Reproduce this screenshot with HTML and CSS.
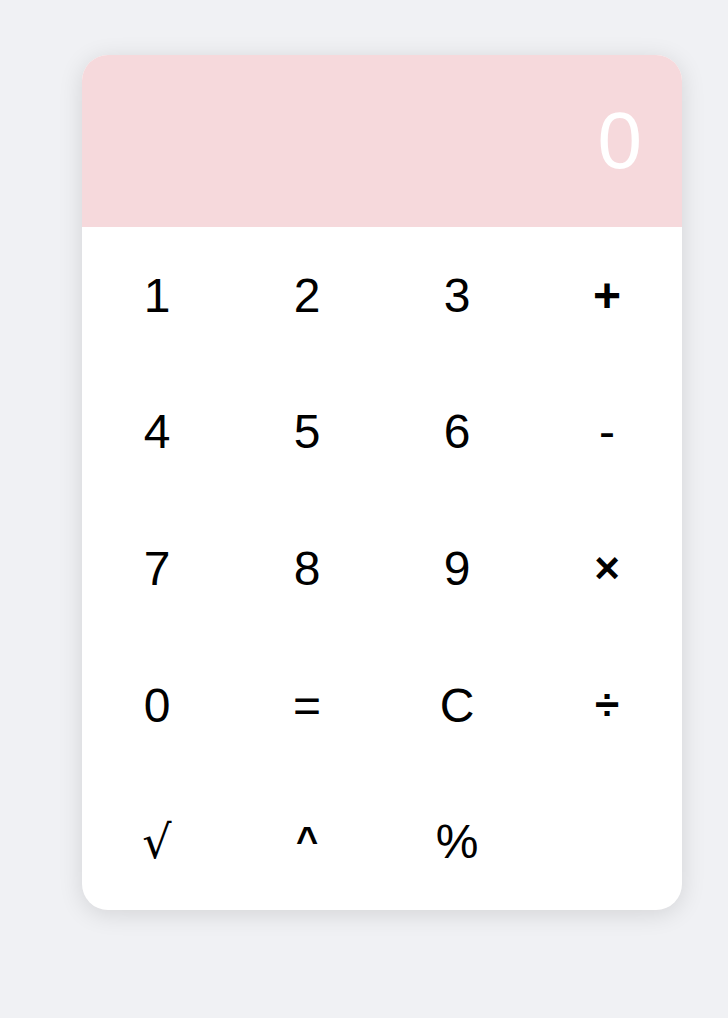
FILE: index.html
```html
<!DOCTYPE html>
<html>
<head>
<meta charset="utf-8">
<link rel="stylesheet" href="styles.css">
</head>
<body>
<div class="calc">
  <div class="display">0</div>
  <div class="keys">
    <button class="key">1</button>
    <button class="key">2</button>
    <button class="key">3</button>
    <button class="key key-bold">+</button>
    <button class="key">4</button>
    <button class="key">5</button>
    <button class="key">6</button>
    <button class="key">-</button>
    <button class="key">7</button>
    <button class="key">8</button>
    <button class="key">9</button>
    <button class="key key-bold key-small">×</button>
    <button class="key">0</button>
    <button class="key">=</button>
    <button class="key">C</button>
    <button class="key key-bold key-small">÷</button>
    <button class="key key-serif">√</button>
    <button class="key key-bold key-caret">^</button>
    <button class="key">%</button>
  </div>
</div>
</body>
</html>
```
FILE: styles.css
```css
html, body {
  margin: 0;
  padding: 0;
  background: #f0f1f4;
  font-family: "Liberation Sans", Arial, sans-serif;
}
body {
  padding: 55px 0 0 82px;
  height: 1018px;
  box-sizing: border-box;
}
.calc {
  width: 600px;
  background: #ffffff;
  border-radius: 26px;
  overflow: hidden;
  box-shadow: 0 4px 24px rgba(0, 0, 0, 0.12);
}
.display {
  background: #f6d9dc;
  color: #ffffff;
  font-size: 80px;
  line-height: 92px;
  height: 92px;
  padding: 40px 40px 40px 40px;
  text-align: right;
}
.keys {
  display: grid;
  grid-template-columns: repeat(4, 150px);
  grid-auto-rows: 136.6px;
}
.key {
  border: none;
  background: transparent;
  font-family: "Liberation Sans", Arial, sans-serif;
  font-size: 48px;
  color: #000;
  padding: 0;
  margin: 0;
  display: flex;
  align-items: center;
  justify-content: center;
}
.key-bold {
  font-weight: bold;
}
.key-small {
  font-size: 44px;
}
.key-caret {
  font-size: 38px;
}
.key-serif {
  font-family: "DejaVu Serif", "Liberation Serif", serif;
  font-size: 46px;
}
```
